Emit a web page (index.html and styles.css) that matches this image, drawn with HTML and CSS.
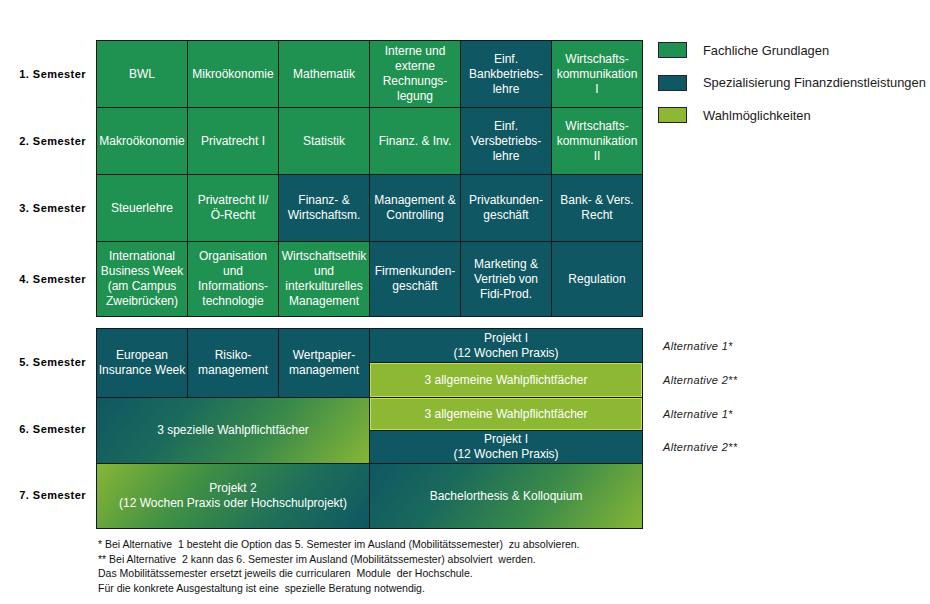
FILE: index.html
```html
<!DOCTYPE html>
<html lang="de">
<head>
<meta charset="utf-8">
<title>Studienverlauf</title>
<link rel="stylesheet" href="styles.css">
</head>
<body>
<div class="page">
  <section class="block top">
    <div class="labels labels-top">
      <div class="lab">1. Semester</div>
      <div class="lab">2. Semester</div>
      <div class="lab">3. Semester</div>
      <div class="lab">4. Semester</div>
    </div>
    <div class="table table-top">
      <div class="c g">BWL</div>
      <div class="c g">Mikroökonomie</div>
      <div class="c g">Mathematik</div>
      <div class="c g">Interne und<br>externe<br>Rechnungs-<br>legung</div>
      <div class="c t">Einf.<br>Bankbetriebs-<br>lehre</div>
      <div class="c g">Wirtschafts-<br>kommunikation<br>I</div>

      <div class="c g">Makroökonomie</div>
      <div class="c g">Privatrecht I</div>
      <div class="c g">Statistik</div>
      <div class="c g">Finanz. &amp; Inv.</div>
      <div class="c t">Einf.<br>Versbetriebs-<br>lehre</div>
      <div class="c g">Wirtschafts-<br>kommunikation<br>II</div>

      <div class="c g">Steuerlehre</div>
      <div class="c g">Privatrecht II/<br>Ö-Recht</div>
      <div class="c t">Finanz- &amp;<br>Wirtschaftsm.</div>
      <div class="c t">Management &amp;<br>Controlling</div>
      <div class="c t">Privatkunden-<br>geschäft</div>
      <div class="c t">Bank- &amp; Vers.<br>Recht</div>

      <div class="c g">International<br>Business Week<br>(am Campus<br>Zweibrücken)</div>
      <div class="c g">Organisation<br>und<br>Informations-<br>technologie</div>
      <div class="c g">Wirtschaftsethik<br>und<br>interkulturelles<br>Management</div>
      <div class="c t">Firmenkunden-<br>geschäft</div>
      <div class="c t">Marketing &amp;<br>Vertrieb von<br>Fidi-Prod.</div>
      <div class="c t">Regulation</div>
    </div>
    <ul class="legend">
      <li class="leg"><span class="sw g"></span>Fachliche Grundlagen</li>
      <li class="leg"><span class="sw t"></span>Spezialisierung Finanzdienstleistungen</li>
      <li class="leg"><span class="sw l"></span>Wahlmöglichkeiten</li>
    </ul>
  </section>

  <section class="block bottom">
    <div class="labels labels-bottom">
      <div class="lab">5. Semester</div>
      <div class="lab">6. Semester</div>
      <div class="lab">7. Semester</div>
    </div>
    <div class="table table-bottom">
      <div class="c t r12">European<br>Insurance Week</div>
      <div class="c t r12">Risiko-<br>management</div>
      <div class="c t r12">Wertpapier-<br>management</div>
      <div class="c t wide">Projekt I<br>(12 Wochen Praxis)</div>
      <div class="c l wide">3 allgemeine Wahlpflichtfächer</div>
      <div class="c grad-up wide-left r34">3 spezielle Wahlpflichtfächer</div>
      <div class="c l wide">3 allgemeine Wahlpflichtfächer</div>
      <div class="c t wide">Projekt I<br>(12 Wochen Praxis)</div>
      <div class="c grad-down wide-left">Projekt 2<br>(12 Wochen Praxis oder Hochschulprojekt)</div>
      <div class="c grad-up wide">Bachelorthesis &amp; Kolloquium</div>
    </div>
    <div class="alts">
      <div class="alt">Alternative 1*</div>
      <div class="alt">Alternative 2**</div>
      <div class="alt">Alternative 1*</div>
      <div class="alt">Alternative 2**</div>
    </div>
  </section>

  <div class="notes">
    <p>* Bei Alternative &nbsp;1 besteht die Option das 5. Semester im Ausland (Mobilitätssemester) &nbsp;zu absolvieren.</p>
    <p>** Bei Alternative &nbsp;2 kann das 6. Semester im Ausland (Mobilitätssemester) absolviert &nbsp;werden.</p>
    <p>Das Mobilitätssemester ersetzt jeweils die curricularen &nbsp;Module &nbsp;der Hochschule.</p>
    <p>Für die konkrete Ausgestaltung ist eine &nbsp;spezielle Beratung notwendig.</p>
  </div>
</div>
</body>
</html>
```
FILE: styles.css
```css
* { box-sizing: border-box; }
html, body { margin: 0; padding: 0; background: #ffffff; }
body { font-family: "Liberation Sans", Arial, sans-serif; color: #111; }
.page { width: 930px; height: 604px; padding-top: 40px; }

.block { display: flex; align-items: flex-start; }
.bottom { margin-top: 11px; }

.labels { width: 96px; display: grid; padding-right: 10px; }
.labels-top { grid-template-rows: 67px 67px 67px 76px; }
.labels-bottom { grid-template-rows: 68px 66px 66px; }
.lab {
  display: flex; align-items: center; justify-content: flex-end;
  font-size: 11px; font-weight: bold; letter-spacing: 0.45px; color: #000;
}

.table {
  display: grid; gap: 1px; background: #101a16; border: 1px solid #101a16;
  grid-template-columns: repeat(6, 90px);
}
.table-top { grid-template-rows: 66px 66px 66px 74px; }
.table-bottom { grid-template-rows: 33px 34px 32px 32px 64px; }

.c {
  display: flex; align-items: center; justify-content: center; text-align: center;
  color: #ffffff; font-size: 12px; line-height: 15px;
}
.g { background: #1f9150; }
.t { background: #0f5762; }
.l { background: #8cb834; }
.table-bottom .l { box-shadow: inset 0 0 0 1px #c9dc62; }

.r12 { grid-row: span 2; }
.r34 { grid-row: span 2; }
.wide { grid-column: 4 / span 3; }
.wide-left { grid-column: 1 / span 3; }

.grad-up { background: linear-gradient(128deg, #0f5762 0%, #1a6a5c 30%, #3a8a4a 62%, #86b636 100%); }
.grad-down { background: linear-gradient(128deg, #86b636 0%, #3f8f45 36%, #1d6e5a 70%, #0f5762 100%); }

.legend { list-style: none; margin: 2px 0 0 15px; padding: 0; }
.leg { display: flex; align-items: center; height: 16px; margin-bottom: 16.5px; font-size: 12.9px; color: #1a1a1a; }
.sw { width: 29px; height: 16px; margin-right: 16px; border: 1px solid #223; }

.alts { display: grid; grid-template-rows: 34px 34px 33px 33px; padding-top: 1px; margin-left: 20px; }
.alt { display: flex; align-items: center; font-size: 11px; font-style: italic; color: #1a1a1a; letter-spacing: 0.3px; }

.notes { margin: 8px 0 0 98px; font-size: 10.5px; color: #111; }
.notes p { margin: 0; line-height: 14.5px; }
```
